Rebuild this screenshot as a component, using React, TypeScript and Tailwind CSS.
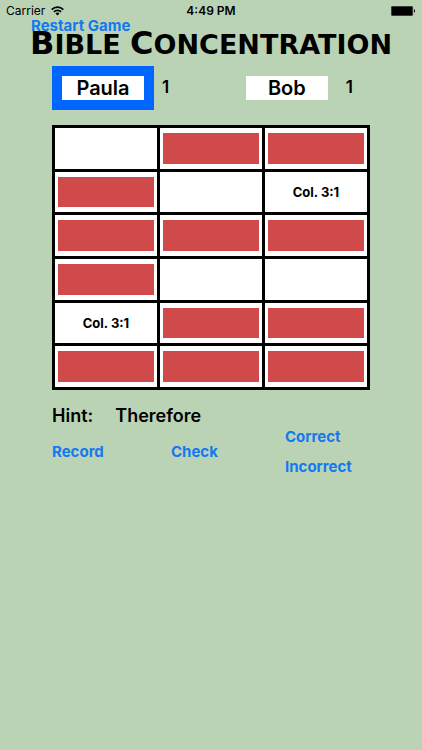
type CardState = "hidden" | "removed" | "shown";

interface Card {
  state: CardState;
  text?: string;
}

const hidden: Card = { state: "hidden" };
const removed: Card = { state: "removed" };
const verse: Card = { state: "shown", text: "Col. 3:1" };

const cards: Card[] = [
  removed, hidden, hidden,
  hidden, removed, verse,
  hidden, hidden, hidden,
  hidden, removed, removed,
  verse, hidden, hidden,
  hidden, hidden, hidden,
];

function StatusBar() {
  return (
    <div className="grid h-[22px] grid-cols-3 items-center px-[6px] text-[12px]">
      <div className="flex items-center gap-[6px]">
        <span>Carrier</span>
        <svg width="13" height="10" viewBox="0 0 13 10" fill="none" stroke="currentColor" strokeWidth="1.7" aria-hidden="true">
          <path d="M0.7 3.6a8.2 8.2 0 0 1 11.6 0" />
          <path d="M2.9 5.9a5.1 5.1 0 0 1 7.2 0" />
          <path d="M6.5 9.5L4.5 7.4a2.8 2.8 0 0 1 4 0Z" fill="currentColor" stroke="none" />
        </svg>
      </div>
      <span className="text-center font-semibold">4:49 PM</span>
      <svg className="justify-self-end" width="25" height="10" viewBox="0 0 25 10" aria-hidden="true">
        <rect x="0.25" y="0.25" width="21.5" height="9.5" rx="1.2" fill="#000" stroke="#4b554a" strokeWidth="0.5" />
        <path d="M23 3.3c1.4 0.3 1.4 3.1 0 3.4Z" />
      </svg>
    </div>
  );
}

function BoardCard({ card }: { card: Card }) {
  if (card.state === "hidden") {
    return (
      <button className="flex bg-white px-[3px] py-[5px]" aria-label="Turn over card">
        <span className="flex-1 self-stretch bg-[#d04a4b]" />
      </button>
    );
  }
  return (
    <div className="flex items-center justify-center bg-white pt-px text-[13px] font-bold">
      {card.text}
    </div>
  );
}

function ActionButton({ label }: { label: string }) {
  return (
    <button className="block text-left text-[15px] leading-[18px] font-bold text-[#1479f0]">
      {label}
    </button>
  );
}

export default function App() {
  return (
    <div className="min-h-screen bg-[#bbd3b5] font-['Inter',sans-serif] text-black">
      <StatusBar />

      <header className="-mt-[5px] flex flex-col">
        <button className="ml-[31px] self-start text-[15px] leading-[18px] font-bold text-[#1479f0]">
          Restart Game
        </button>
        <h1 className="-mt-[8px] h-8 text-center font-['DejaVu_Sans',sans-serif] text-[27px] leading-[32px] font-bold whitespace-nowrap">
          <span className="text-[32px]">B</span>IBLE <span className="text-[32px]">C</span>ONCENTRATION
        </h1>
      </header>

      <main className="px-[52px] pt-[7px]">
        <div className="flex h-[44px] items-center text-[17px] font-semibold">
          <div className="border-10 border-[#0066ff]">
            <input
              aria-label="First player"
              defaultValue="Paula"
              className="block h-6 w-[82px] bg-white text-center text-[20px] outline-none"
            />
          </div>
          <span className="ml-2">1</span>
          <input
            aria-label="Second player"
            defaultValue="Bob"
            className="ml-auto block h-6 w-[82px] bg-white text-center text-[20px] outline-none"
          />
          <span className="mr-[17px] ml-[18px]">1</span>
        </div>

        <div className="mt-[15px] grid h-[265px] grid-cols-3 grid-rows-6 gap-[3px] border-3 border-black bg-black">
          {cards.map((card, i) => (
            <BoardCard key={i} card={card} />
          ))}
        </div>

        <p className="mt-[14px] flex gap-[22px] text-[18px] leading-6 font-semibold">
          <span>Hint:</span>
          <span>Therefore</span>
        </p>

        <div className="flex items-center">
          <div className="w-[119px]">
            <ActionButton label="Record" />
          </div>
          <ActionButton label="Check" />
          <div className="ml-auto flex w-[85px] flex-col gap-3">
            <ActionButton label="Correct" />
            <ActionButton label="Incorrect" />
          </div>
        </div>
      </main>
    </div>
  );
}
